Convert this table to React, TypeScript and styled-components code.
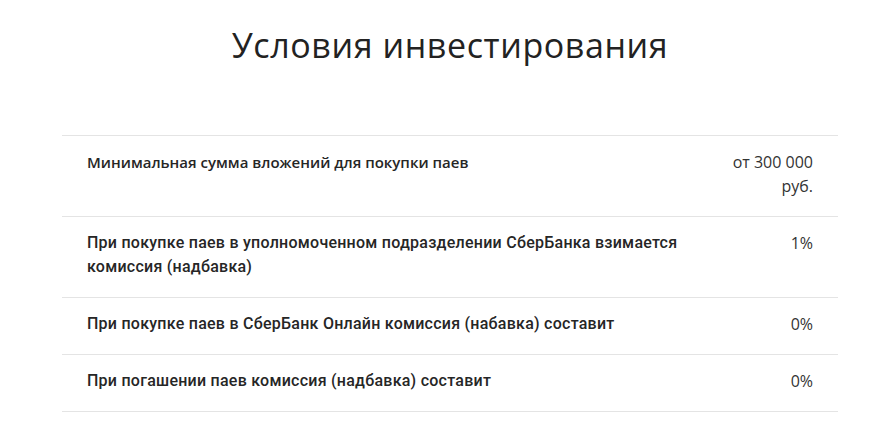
import React from "react";
import styled, { createGlobalStyle } from "styled-components";

const Global = createGlobalStyle`
  html, body { margin: 0; padding: 0; background: #fff; }
  body { font-family: "Open Sans", "Noto Sans", sans-serif; color: #222; }
`;

const Page = styled.div`
  width: 881px;
  padding: 25px 43px 0 62px;
  box-sizing: border-box;
`;

const Title = styled.h1`
  margin: 0 0 70px;
  text-align: center;
  font-family: "Open Sans", sans-serif;
  font-weight: 400;
  font-size: 34px;
  line-height: 40px;
  color: #222;
  letter-spacing: 0.6px;
`;

const Table = styled.div`
  border-top: 1px solid #e4e4e4;
`;

const Row = styled.div`
  display: flex;
  justify-content: space-between;
  gap: 24px;
  padding: 14px 25px 18px;
  border-bottom: 1px solid #e4e4e4;
`;

const Label = styled.div<{ $alt?: boolean }>`
  flex: 1;
  font-family: ${(p) => (p.$alt ? '"Roboto", sans-serif' : '"Open Sans", sans-serif')};
  font-weight: ${(p) => (p.$alt ? 500 : 600)};
  font-size: ${(p) => (p.$alt ? "16px" : "15px")};
  letter-spacing: ${(p) => (p.$alt ? "0.25px" : "0")};
  line-height: 24px;
  color: #262626;
`;

const Value = styled.div`
  width: 90px;
  text-align: right;
  font-family: "Open Sans", sans-serif;
  font-weight: 400;
  font-size: 16px;
  line-height: 24px;
  color: #333;
`;

const rows = [
  { label: "Минимальная сумма вложений для покупки паев", value: "от 300 000 руб.", alt: false },
  { label: "При покупке паев в уполномоченном подразделении СберБанка взимается комиссия (надбавка)", value: "1%", alt: true },
  { label: "При покупке паев в СберБанк Онлайн комиссия (набавка) составит", value: "0%", alt: true },
  { label: "При погашении паев комиссия (надбавка) составит", value: "0%", alt: true },
];

export default function App() {
  return (
    <Page>
      <Global />
      <Title>Условия инвестирования</Title>
      <Table>
        {rows.map((r) => (
          <Row key={r.label}>
            <Label $alt={r.alt}>{r.label}</Label>
            <Value>{r.value}</Value>
          </Row>
        ))}
      </Table>
    </Page>
  );
}
